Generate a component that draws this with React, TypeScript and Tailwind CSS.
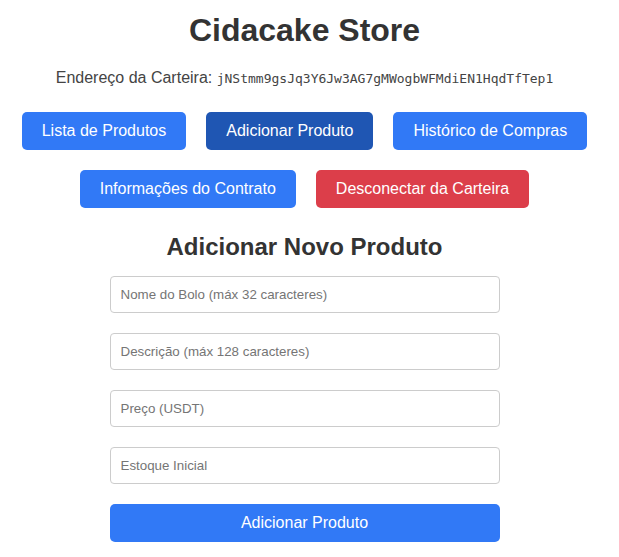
import React, { useState } from 'react';

const navItems = [
  { id: 'list', label: 'Lista de Produtos' },
  { id: 'add', label: 'Adicionar Produto' },
  { id: 'history', label: 'Histórico de Compras' },
  { id: 'info', label: 'Informações do Contrato' },
];

const fields = [
  'Nome do Bolo (máx 32 caracteres)',
  'Descrição (máx 128 caracteres)',
  'Preço (USDT)',
  'Estoque Inicial',
];

export default function App() {
  const [active, setActive] = useState('add');
  const address = 'jNStmm9gsJq3Y6Jw3AG7gMWogbWFMdiEN1HqdTfTep1';

  return (
    <div className="w-[619px] min-h-[557px] bg-white">
      <div
        className="w-[609px] text-[#333] flex flex-col items-center pt-[12px]"
        style={{ fontFamily: '"Liberation Sans", Arial, sans-serif' }}
      >
        <h1 className="text-[32px] leading-[37px] font-bold">Cidacake Store</h1>

        <p className="mt-[20px] text-[16px] leading-[18px] text-[#444]">
          Endereço da Carteira:{' '}
          <span className="text-[13px]" style={{ fontFamily: '"DejaVu Sans Mono", monospace' }}>
            {address}
          </span>
        </p>

        <nav className="mt-[24px] w-[590px] flex flex-wrap justify-center gap-x-[20px] gap-y-[20px]">
          {navItems.map(item => (
            <button
              key={item.id}
              onClick={() => setActive(item.id)}
              className={`h-[38px] px-[20px] rounded-[5px] text-white text-[16px] ${
                active === item.id ? 'bg-[#1f56b3]' : 'bg-[#3179f6]'
              }`}
            >
              {item.label}
            </button>
          ))}
          <button className="h-[38px] px-[20px] rounded-[5px] text-white text-[16px] bg-[#dc3e4a]">
            Desconectar da Carteira
          </button>
        </nav>

        <h2 className="mt-[25px] text-[24px] leading-[28px] font-bold">Adicionar Novo Produto</h2>

        <form className="mt-[15px] w-[390px] flex flex-col gap-[20px]" onSubmit={e => e.preventDefault()}>
          {fields.map(f => (
            <input
              key={f}
              placeholder={f}
              className="h-[37px] px-[10px] border border-[#ccc] rounded-[4px] text-[13.33px] placeholder:text-[#757575] outline-none"
            />
          ))}
          <button type="submit" className="h-[38px] rounded-[5px] bg-[#3179f6] text-white text-[16px]">
            Adicionar Produto
          </button>
        </form>
      </div>
    </div>
  );
}
